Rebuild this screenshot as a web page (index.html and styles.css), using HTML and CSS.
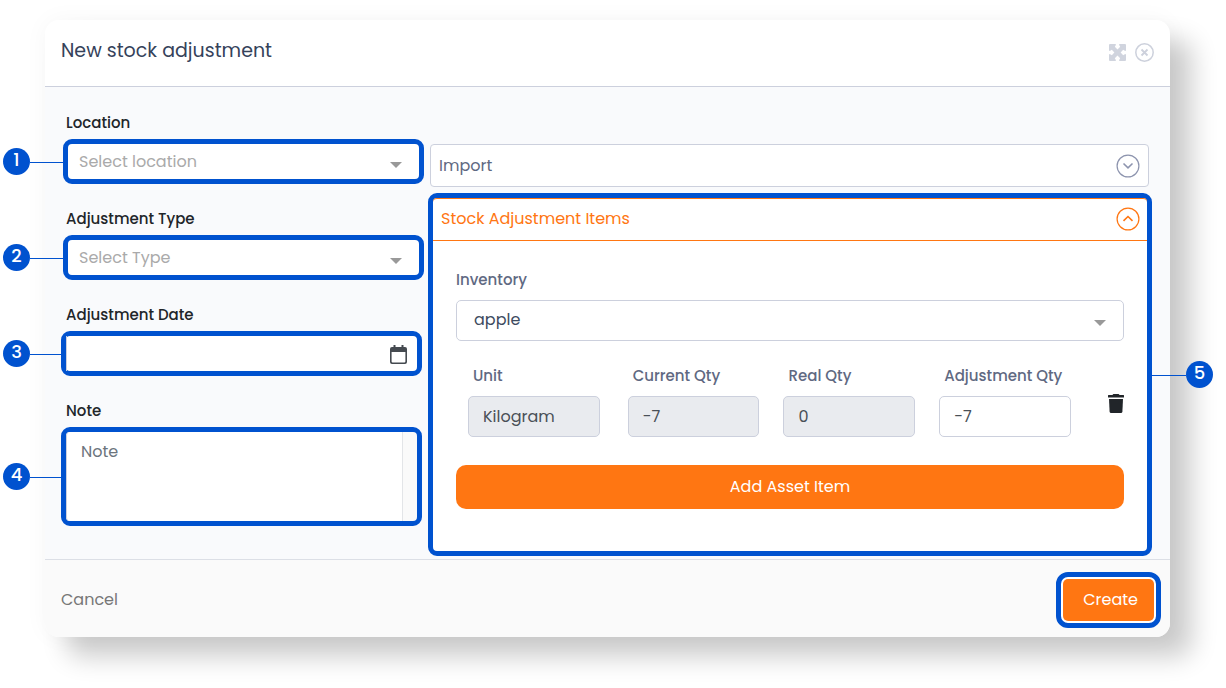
FILE: index.html
```html
<!DOCTYPE html>
<html lang="en">
<head>
  <meta charset="UTF-8">
  <meta name="viewport" content="width=device-width, initial-scale=1">
  <title>New stock adjustment</title>
  <link rel="stylesheet" href="styles.css">
</head>
<body>
  <form class="modal">
    <header class="modal-header">
      <h1>New stock adjustment</h1>
      <div class="header-actions">
        <button type="button" class="icon-btn" aria-label="Expand">
          <svg width="17" height="17" viewBox="0 0 17 17">
            <path d="M0 1Q0 0 1 0H6.500L7 .8 5.800 2.800 8.500 5.400 11.200 2.800 10 .8 10.500 0H16Q17 0 17 1V6.500L16.200 7 14.200 5.800 11.600 8.500 14.200 11.200 16.200 10 17 10.500V16Q17 17 16 17H10.500L10 16.200 11.200 14.200 8.500 11.600 5.800 14.200 7 16.200 6.500 17H1Q0 17 0 16V10.500L.8 10 2.800 11.200 5.400 8.500 2.800 5.800 .8 7 0 6.500Z" fill="#d0d4de"/>
          </svg>
        </button>
        <button type="button" class="icon-btn" aria-label="Close">
          <svg width="19" height="19" viewBox="0 0 19 19" fill="none" stroke="#cdd1dc">
            <circle cx="9.500" cy="9.500" r="8.700" stroke-width="1.500"/>
            <path d="M6.500 6.500l6 6M12.500 6.500l-6 6" stroke-width="1.800"/>
          </svg>
        </button>
      </div>
    </header>

    <div class="modal-body">
      <div class="details">
        <div class="field">
          <label for="location">Location</label>
          <div class="highlight inset-left">
            <span class="callout">1</span>
            <select id="location" class="placeholder">
              <option>Select location</option>
            </select>
            <svg class="caret" width="12" height="6" viewBox="0 0 12 6"><path d="M0 0h12L6 6z" fill="#999"/></svg>
          </div>
        </div>
        <div class="field">
          <label for="type">Adjustment Type</label>
          <div class="highlight inset-left">
            <span class="callout">2</span>
            <select id="type" class="placeholder">
              <option>Select Type</option>
            </select>
            <svg class="caret" width="12" height="6" viewBox="0 0 12 6"><path d="M0 0h12L6 6z" fill="#999"/></svg>
          </div>
        </div>
        <div class="field">
          <label for="date">Adjustment Date</label>
          <div class="highlight inset-right">
            <span class="callout">3</span>
            <input id="date" type="text">
            <svg class="calendar" width="17" height="19" viewBox="0 0 17 19">
              <path d="M3.500 0h2v2h6V0h2v2H15a2 2 0 0 1 2 2v13a2 2 0 0 1-2 2H2a2 2 0 0 1-2-2V4a2 2 0 0 1 2-2h1.500zM1.600 7v9.600q0 .8.8.8h12.200q.8 0 .8-.8V7z" fill="#454a50" fill-rule="evenodd"/>
            </svg>
          </div>
        </div>
        <div class="field">
          <label for="note">Note</label>
          <div class="highlight inset-right note-box">
            <span class="callout">4</span>
            <textarea id="note" placeholder="Note"></textarea>
          </div>
        </div>
      </div>

      <div class="panels">
        <button type="button" class="panel-toggle import">
          Import
          <svg width="24" height="24" viewBox="0 0 24 24" fill="none" stroke="#8d94ae">
            <circle cx="12" cy="12" r="10.900" stroke-width="1.200"/>
            <path d="M7.500 9.500l4.500 4.300 4.500-4.300" stroke-width="1.600"/>
          </svg>
        </button>

        <section class="items">
          <span class="callout callout-right">5</span>
          <button type="button" class="panel-toggle active">
            Stock Adjustment Items
            <svg width="24" height="24" viewBox="0 0 24 24" fill="none" stroke="#ff7612">
              <circle cx="12" cy="12" r="10.900" stroke-width="1.200"/>
              <path d="M7.500 13.800l4.500-4.300 4.500 4.300" stroke-width="1.600"/>
            </svg>
          </button>
          <div class="items-body">
            <label for="inventory">Inventory</label>
            <div class="inventory">
              <select id="inventory">
                <option>apple</option>
              </select>
              <svg class="caret" width="12" height="6" viewBox="0 0 12 6"><path d="M0 0h12L6 6z" fill="#999"/></svg>
            </div>

            <div class="item-row">
              <div class="cell">
                <label for="unit">Unit</label>
                <input id="unit" type="text" value="Kilogram" disabled>
              </div>
              <div class="cell">
                <label for="current">Current Qty</label>
                <input id="current" type="text" value="-7" disabled>
              </div>
              <div class="cell">
                <label for="real">Real Qty</label>
                <input id="real" type="text" value="0" disabled>
              </div>
              <div class="cell">
                <label for="adjust">Adjustment Qty</label>
                <input id="adjust" type="text" value="-7">
              </div>
              <button type="button" class="icon-btn trash" aria-label="Delete item">
                <svg width="16" height="19" viewBox="0 0 16 19" fill="#212529">
                  <path d="M0 1.500Q0 1 .5 1H4.500L5 .3Q5.200 0 5.600 0h4.800q.4 0 .6.3l.5.700h4q.5 0 .5.500V3.500H0z"/>
                  <path d="M1 5h14l-.6 12.500q-.1 1.500-1.500 1.500H3.100q-1.400 0-1.500-1.500z"/>
                </svg>
              </button>
            </div>

            <button type="button" class="primary add-item">Add Asset Item</button>
          </div>
        </section>
      </div>
    </div>

    <footer class="modal-footer">
      <button type="button" class="cancel">Cancel</button>
      <div class="create-box">
        <button type="submit" class="primary create">Create</button>
      </div>
    </footer>
  </form>
</body>
</html>
```
FILE: styles.css
```css
* { box-sizing: border-box; }

body {
  margin: 0;
  padding: 20px 56px 50px 45px;
  background: #fff;
  color: #212529;
  font-family: Poppins, Inter, "Open Sans", sans-serif;
  font-size: 16px;
}

button, input, select, textarea {
  font: inherit;
  color: inherit;
  margin: 0;
  border: 0;
  background: none;
}

button { padding: 0; cursor: pointer; }
svg { display: block; }

.modal {
  border-radius: 14px;
  background: #fff;
  box-shadow: 22px 20px 26px rgba(0, 0, 0, 0.2), 0 0 24px rgba(0, 0, 0, 0.04);
}

/* header */
.modal-header {
  display: flex;
  justify-content: space-between;
  align-items: center;
  height: 67px;
  padding: 0 16px 2px;
  border-bottom: 1px solid #ccd0dd;
}

h1 {
  margin: 0;
  padding-bottom: 4px;
  font-size: 19px;
  font-weight: 400;
  color: #35425a;
}

.header-actions { display: flex; align-items: center; gap: 9px; }

/* body */
.modal-body {
  display: grid;
  grid-template-columns: 363px minmax(0, 1fr);
  gap: 4px;
  padding: 24px 18px 3px 16px;
  background: #f9fafc;
}

.field { margin-bottom: 23px; }

label {
  display: block;
  font-size: 15px;
  line-height: 20px;
  font-weight: 500;
}

.field label { margin: 0 0 6px 5px; padding-top: 2px; }

.highlight {
  position: relative;
  height: 45px;
  border: 5px solid #0052cf;
  border-radius: 9px;
  background: #fff;
}

.inset-left { margin-left: 2px; }
.inset-right { margin-right: 2px; }

.highlight select,
.highlight input {
  display: block;
  width: 100%;
  height: 100%;
  padding: 0 11px;
}

.highlight input { border-left: 1px solid #ccd0dd; }

select { appearance: none; }
.placeholder { color: #aaa; }

.caret {
  position: absolute;
  right: 17px;
  top: 18px;
}

.calendar {
  position: absolute;
  right: 10px;
  top: 9px;
}

.note-box {
  height: 99px;
  padding-right: 14px;
  background: #fafafa;
}

textarea {
  display: block;
  width: 100%;
  height: 100%;
  padding: 8px 14px;
  border-left: 1px solid #ccd0dd;
  border-right: 1px solid #e3e5e8;
  border-radius: 4px 0 0 4px;
  background: #fff;
  line-height: 24px;
  resize: none;
}

textarea::placeholder { color: #6c757d; opacity: 1; }

/* numbered callouts hanging outside the modal */
.callout {
  position: absolute;
  top: 50%;
  right: 100%;
  width: 27px;
  height: 27px;
  margin: -14px 38px 0 0;
  border-radius: 50%;
  background: #0052cf;
  color: #fff;
  font-size: 18px;
  font-weight: 500;
  line-height: 24px;
  text-align: center;
}

.inset-right .callout { margin-right: 36px; }

.callout::after {
  content: "";
  position: absolute;
  top: 14px;
  left: 100%;
  width: 34px;
  height: 1px;
  background: #0052cf;
}

.callout-right {
  right: auto;
  left: 100%;
  margin: -14px 0 0 39px;
}

.callout-right::after { left: auto; right: 100%; }

/* right column */
.panels { padding-top: 33px; }

.panel-toggle {
  display: flex;
  justify-content: space-between;
  align-items: center;
  width: 100%;
  height: 43px;
  padding: 0 8px;
  color: #5f6982;
}

.import {
  width: auto;
  min-width: calc(100% - 5px);
  margin: 0 3px 6px 2px;
  border: 1px solid #ccd0dd;
  border-radius: 4px;
  background: #fff;
}

.active {
  padding: 0 7px 2px 8px;
  border-top: 1px solid #ff7612;
  border-bottom: 1px solid #ff7612;
  border-radius: 4px 4px 0 0;
  color: #ff7612;
}

.items {
  position: relative;
  border: 5px solid #0052cf;
  border-radius: 9px;
  background: #fff;
}

.items-body { padding: 29px 23px 42px; }
.items-body label { color: #5f6982; }

.items-body input,
.items-body select {
  display: block;
  width: 100%;
  height: 41px;
  padding: 0 14px;
  border: 1px solid #ccd0dd;
  border-radius: 5px;
  background: #fff;
  color: #495057;
}

.inventory {
  position: relative;
  margin: 10px 0 25px;
}

.items-body .inventory select { padding: 0 17px 2px; color: #3d4b60; }
.inventory .caret { right: 18px; top: 20px; }

.item-row {
  display: grid;
  grid-template-columns: 34fr 33fr 33fr 33fr 29px;
  column-gap: 24px;
  margin: 0 0 28px 12px;
}

.cell { min-width: 0; }
.cell:first-child { padding-right: 4px; }
.cell label { margin: 0 0 10px 5px; }
.items-body input:disabled { background: #e9ebef; }
.trash { align-self: start; justify-self: end; margin-top: 28px; }

.primary {
  padding-bottom: 2px;
  background: #ff7612;
  color: #fff;
}

.add-item {
  width: 100%;
  height: 44px;
  border-radius: 10px;
}

/* footer */
.modal-footer {
  display: flex;
  justify-content: space-between;
  align-items: center;
  padding: 12px 9px 9px 16px;
  border-top: 1px solid #dcdfe6;
  border-radius: 0 0 14px 14px;
  background: #fafafa;
}

.cancel { padding-bottom: 2px; color: #777; }

.create-box {
  padding: 2px;
  border: 5px solid #0052cf;
  border-radius: 12px;
  background: #fff;
}

.create {
  display: block;
  height: 42px;
  padding: 0 16px 2px 20px;
  border-radius: 5px;
}
```
